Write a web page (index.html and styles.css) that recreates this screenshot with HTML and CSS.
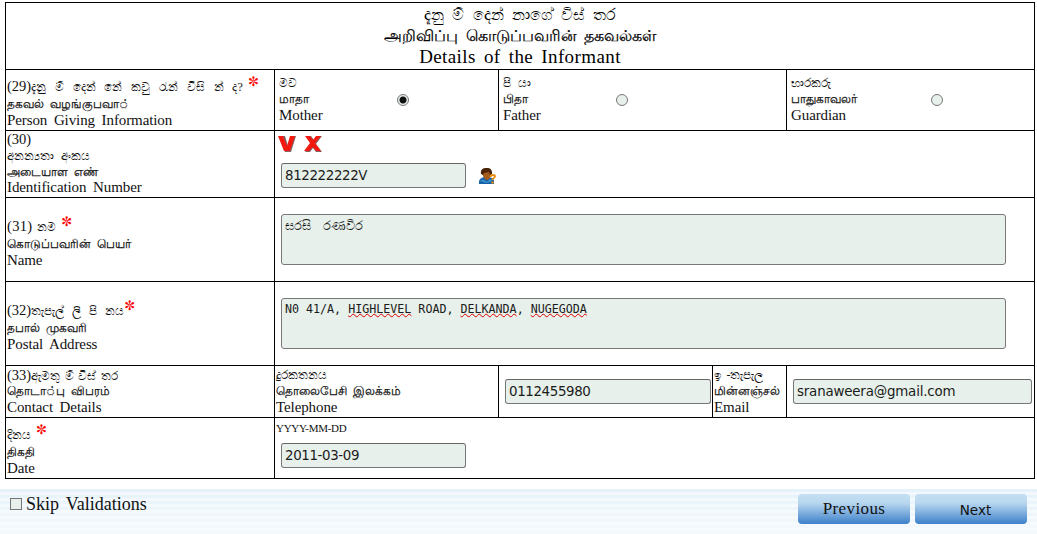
FILE: index.html
```html
<!DOCTYPE html>
<html lang="en">
<head>
<meta charset="utf-8">
<title>Details of the Informant</title>
<link rel="stylesheet" href="styles.css">
</head>
<body>
<form class="page">
<div class="table">
  <div class="cell title full">
    <div class="si">දැනු ම් දෙන් නාගේ විස් තර</div>
    <div class="ta">அறிவிப்பு கொடுப்பவரின் தகவல்கள்</div>
    <div class="en">Details of the Informant</div>
  </div>

  <div class="cell label r29">
    <div class="si"><span>(29)</span>දැනු ම් දෙන් නේ කවු රැන් විසි න් ද?<b class="star">✼</b></div>
    <div class="ta">தகவல் வழங்குபவா&#x25CC;்</div>
    <div class="en">Person Giving Information</div>
  </div>
  <div class="cell choice mother">
    <div class="words"><div class="si">මව</div><div class="ta">மாதா</div><div class="en">Mother</div></div>
    <i class="radio on"></i>
  </div>
  <div class="cell choice father">
    <div class="words"><div class="si">පි යා</div><div class="ta">பிதா</div><div class="en">Father</div></div>
    <i class="radio"></i>
  </div>
  <div class="cell choice guardian">
    <div class="words"><div class="si">භාරකරු</div><div class="ta">பாதுகாவலர்</div><div class="en">Guardian</div></div>
    <i class="radio"></i>
  </div>

  <div class="cell label r30">
    <div class="num"><span>(30)</span></div>
    <div class="si">අනන්‍යතා අංකය</div>
    <div class="ta">அடையாள எண்</div>
    <div class="en">Identification Number</div>
  </div>
  <div class="cell wide identity">
    <div class="marks">
      <svg width="19" height="18" viewBox="0 0 19 18"><path class="mark-shadow" d="M1 1h6l3 10 3-10h5l-5 16H7z"/><path class="mark" d="M0 1h5l4 10 3-10h5l-5 15H6z"/></svg>
      <svg width="19" height="18" viewBox="0 0 19 18"><path class="mark-shadow" d="M2 1h5l3 4 3-4h5l-6 8 6 8h-6l-3-4-3 4H1l6-8z"/><path class="mark" d="M1 1h5l3 4 3-4h5l-6 7 6 8h-5l-3-4-4 4H0l6-8z"/></svg>
    </div>
    <div class="pin-row">
      <div class="input short">812222222V</div>
      <svg class="person" width="18" height="17" viewBox="0 0 18 17"><path fill="#1763a8" d="M0 16v-3q1-3 5-4h5q5 1 5 4v3z"/><path fill="#3d91d0" d="M1 13q2-2 4-1l3 2 3-3q2 1 2 2l-5 2z"/><path fill="#a55b18" d="M3 4h9v4q-2 4-4 4T4 8z"/><path fill="#4b2408" d="M2 6Q1 1 6 0q6-1 7 4v2l-2 1-1-3-5 1-1 2z"/><path fill="none" stroke="#e88b08" stroke-width="1.8" d="M11.500 9q0-2 2-2 2.500 0 2.500 1.500 0 1-2.500 2.500v1"/><circle cx="13.500" cy="14.500" r="1.200" fill="#e88b08"/></svg>
    </div>
  </div>

  <div class="cell label r31">
    <div class="si"><span>(31)</span> නම<b class="star">✼</b></div>
    <div class="ta">கொடுப்பவரின் பெயர்</div>
    <div class="en">Name</div>
  </div>
  <div class="cell wide area-cell"><div class="area name">සරසි&nbsp; රණවීර</div></div>

  <div class="cell label r32">
    <div class="si"><span>(32)</span>තැපැල් ලි පි නය<b class="star">✼</b></div>
    <div class="ta">தபால் முகவரி</div>
    <div class="en">Postal Address</div>
  </div>
  <div class="cell wide area-cell"><div class="area">N0 41/A, <u>HIGHLEVEL</u> ROAD, <u>DELKANDA</u>, <u>NUGEGODA</u></div></div>

  <div class="cell label r33">
    <div class="si"><span>(33)</span>ඇමතු ම් විස් තර</div>
    <div class="ta">தொடா&#x25CC;்பு விபரம்</div>
    <div class="en">Contact Details</div>
  </div>
  <div class="cell label r33 phone">
    <div class="si">දුරකතනය</div>
    <div class="ta">தொலைபேசி இலக்கம்</div>
    <div class="en">Telephone</div>
  </div>
  <div class="cell field"><div class="input">0112455980</div></div>
  <div class="cell label r33 email">
    <div class="si">ඉ -තැපැල</div>
    <div class="ta">மின்னஞ்சல்</div>
    <div class="en">Email</div>
  </div>
  <div class="cell field last"><div class="input">sranaweera@gmail.com</div></div>

  <div class="cell label rdate">
    <div class="si">දිනය<b class="star">✼</b></div>
    <div class="ta">திகதி</div>
    <div class="en">Date</div>
  </div>
  <div class="cell wide date"><div class="hint">YYYY-MM-DD</div><div class="input short">2011-03-09</div></div>
</div>
<div class="footer">
  <div class="skip"><i class="check"></i><span>Skip Validations</span></div>
  <div class="buttons"><div class="button prev">Previous</div><div class="button next">Next</div></div>
</div>
</form>
</body>
</html>
```
FILE: styles.css
```css
* { box-sizing: border-box; }
body { margin: 0; background: #fff; color: #111; font-family: "Liberation Serif", "Noto Sans", serif; }
.page { height: 534px; padding-top: 2px; display: flex; flex-direction: column; overflow: hidden; }
.table {
  display: grid; width: 1030px; margin-left: 5px;
  grid-template-columns: 269px 224px 214px 74px 248px;
  grid-template-rows: 67px 61px 67px 84px 84px 52px 61px;
  border-top: 1px solid #000; border-left: 1px solid #000;
}
.cell { border-right: 1px solid #000; border-bottom: 1px solid #000; min-width: 0; white-space: nowrap; }
.full { grid-column: 1 / -1; }
.wide { grid-column: 2 / -1; }
.title { text-align: center; padding-top: 1px; color: #000; }
.title div { height: 21px; line-height: 21px; }
.label { padding-left: 1px; }
.label div, .words div { height: 16px; line-height: 16px; }
.si { font-size: 12px; word-spacing: 4px; }
.ta { font-size: 12px; word-spacing: 3px; -webkit-text-stroke: .25px currentColor; }
.title .si { font-size: 16px; word-spacing: 4.5px; }
.title .ta { font-size: 16px; word-spacing: 3.5px; }
.si span, .num span { font-size: 14.5px; }
.si span { word-spacing: 0; }
.en { font-size: 15px; }
.title .en { font-size: 19px; letter-spacing: .4px; word-spacing: 3px; line-height: 22px; }
.label .en, .words .en { letter-spacing: -.1px; word-spacing: 3px; }
.words .en { line-height: 17px; }
.star { color: #f00; font: 13px/10px "DejaVu Sans", sans-serif; vertical-align: 5px; margin-left: 5px; }
.r32 .star { margin-left: 0; }
.r29 { padding-top: 7px; }
.label.r29 .si, .label.r31 .si, .label.r32 .si, .label.rdate .si { height: 19px; line-height: 14px; }
.r29 .si { word-spacing: 5.1px; letter-spacing: .25px; }
.r29 .si span { letter-spacing: 0; }
.r30 { padding-top: 1px; }
.label.r30 .num { line-height: 14px; }
.label.r30 .en { line-height: 15px; }
.r31, .r32 { padding-top: 19px; }
.r32 .si { word-spacing: 5px; }
.r31 .si { word-spacing: 1px; letter-spacing: .3px; }
.r33 { padding-top: 1px; }
.r33 .si { word-spacing: 1.5px; }
.rdate { padding-top: 7px; }
.choice { display: flex; padding: 5px 0 0 4px; }
.words { width: 118px; }
.father { grid-column: 3 / 5; }
.father .words { width: 113px; }
.guardian .words { width: 140px; }
.radio { width: 12px; height: 12px; border: 1px solid #777; border-radius: 50%; background: #e7f0ea; margin-top: 19px; }
.on { background: radial-gradient(circle, #111 0 3px, #e7f0ea 4px); }
.identity { padding: 4px 0 0 3px; }
.marks { height: 18px; display: flex; gap: 7px; }
.mark { fill: #f31911; }
.mark-shadow { fill: #846464; }
.pin-row { display: flex; padding: 10px 0 0 3px; }
.person { margin: 5px 0 0 13px; }
.input { height: 25px; border: 1px solid #777; border-top-color: #666; border-radius: 3px; background: #e7f0ea; font: 13.4px/23px "DejaVu Sans", sans-serif; letter-spacing: -.37px; padding-left: 3px; color: #1b1b1b; }
.last .input { letter-spacing: -.18px; }
.short { width: 185px; }
.area-cell { padding: 16px 0 0 6px; }
.area { width: 725px; height: 51px; border: 1px solid #777; border-radius: 3px; background: #e7f0ea; padding: 3px; font: 11.67px/15px "DejaVu Sans Mono", monospace; color: #1b1b1b; }
.area u { text-decoration: underline wavy #d00 1px; text-underline-offset: 0; text-decoration-skip-ink: none; }
.area.name { font: 12.5px/17px "Liberation Serif", serif; word-spacing: 3px; }
.field { padding: 13px 1px 0 6px; }
.last { padding-right: 2px; }
.date { padding-left: 1px; }
.hint { font-size: 11px; line-height: 20px; letter-spacing: -.3px; }
.date .input { margin: 5px 0 0 5px; }
.footer { margin-top: 10px; height: 45px; display: flex; justify-content: space-between; background: linear-gradient(transparent, rgba(255,255,255,.6)), repeating-linear-gradient(#e6f2fa 0 3px, #f1f8fd 3px 6px); }
.skip { display: flex; padding: 5px 0 0 10px; font-size: 18px; line-height: 20px; }
.skip span { margin-left: 4px; word-spacing: 2.5px; }
.check { width: 12px; height: 12px; margin-top: 4px; border: 1px solid #777; background: #e7f0ea; }
.buttons { display: flex; gap: 5px; padding: 5px 10px 0 0; }
.button { width: 112px; height: 30px; border-radius: 4px; background: linear-gradient(#c4dff2, #b8d7ef 30%, #3d80ca); text-align: center; color: #111; }
.prev { font-size: 17px; line-height: 29px; letter-spacing: .4px; }
.next { font: 13.5px/32px "DejaVu Sans", sans-serif; padding-left: 9px; }
```
